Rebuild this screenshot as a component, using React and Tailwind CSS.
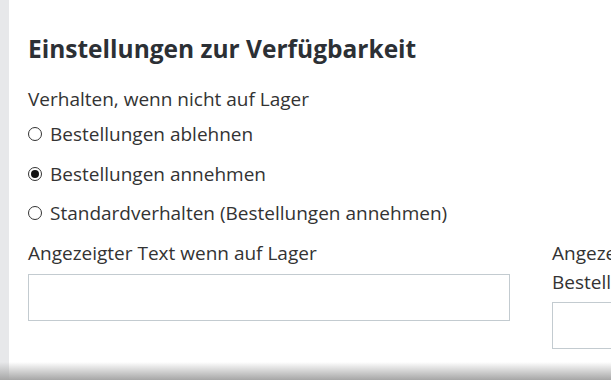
import React from "react";

const Radio = ({ checked, label }) => (
  <label className="flex items-center gap-[8px] h-[28px]">
    <span className="w-[14px] h-[14px] rounded-full border border-[#333] flex items-center justify-center bg-white shrink-0">
      {checked && <span className="w-[8px] h-[8px] rounded-full bg-[#111]" />}
    </span>
    <span>{label}</span>
  </label>
);

const App = () => {
  return (
    <div className="relative w-[611px] h-[380px] overflow-hidden bg-white flex text-[#333] font-['Open_Sans',sans-serif]">
      <div className="w-[9px] bg-[#e7e8ea] shrink-0" />
      <div className="flex-1 pl-[19px] pt-[33px]">
        <h2 className="text-[24.5px] leading-[32px] font-bold text-[#2c3035]">
          Einstellungen zur Verfügbarkeit
        </h2>
        <div className="text-[19px] leading-[28px]">
          <p className="mt-[20px]">Verhalten, wenn nicht auf Lager</p>
          <div className="mt-[7px] flex flex-col gap-[11.5px]">
            <Radio label="Bestellungen ablehnen" />
            <Radio checked label="Bestellungen annehmen" />
            <Radio label="Standardverhalten (Bestellungen annehmen)" />
          </div>
          <div className="mt-[12px] flex gap-[42px] w-[1010px] leading-[29px]">
            <div className="w-[482px] shrink-0">
              <p>Angezeigter Text wenn auf Lager</p>
              <div className="mt-[6px] h-[47px] border border-[#c3cbd0] bg-white" />
            </div>
            <div className="w-[482px] shrink-0">
              <p>Angezeigter Text wenn nicht auf Lager und Bestellungen erlaubt</p>
              <div className="mt-[5px] h-[47px] border border-[#c3cbd0] bg-white" />
            </div>
          </div>
        </div>
      </div>
      <div className="absolute left-0 right-0 bottom-0 h-[18px] bg-gradient-to-b from-white/0 to-[#a6a6a6]" />
    </div>
  );
};

export default App;
